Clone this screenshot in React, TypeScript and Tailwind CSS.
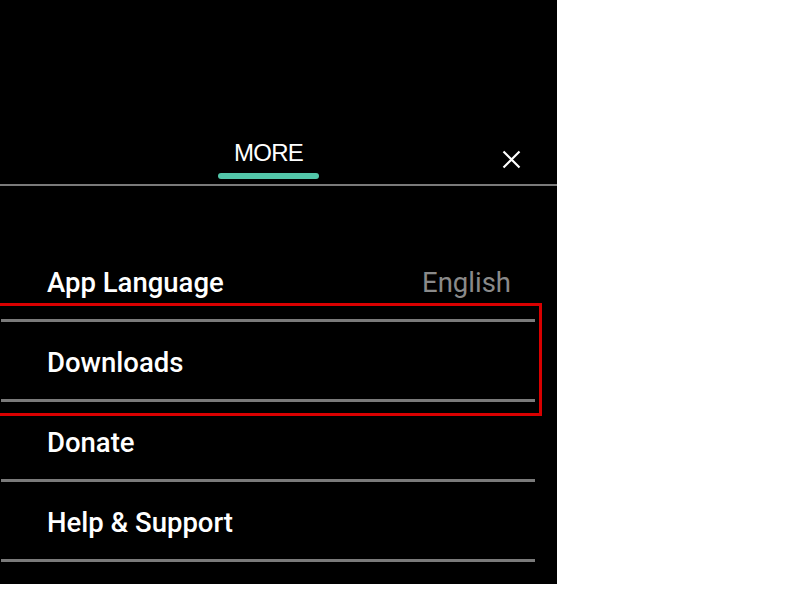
import React from 'react'

const rows = [
  { label: 'App Language', value: 'English' },
  { label: 'Downloads' },
  { label: 'Donate' },
  { label: 'Help & Support' },
]

export default function App() {
  return (
    <div className="w-[800px] h-[600px] bg-white">
      <div className="relative w-[557px] h-[584px] bg-black overflow-hidden">
        {/* header */}
        <div className="flex items-end h-[184px] pl-[218px] pr-[36px]">
          <div className="flex flex-col items-center w-[101px]">
            <span className="text-[24px] leading-[24px] tracking-[-0.8px] text-white font-['Liberation_Sans',Arial,sans-serif]">MORE</span>
            <div className="mt-[8px] mb-[5px] h-[6px] w-full rounded-full bg-[#52c6a9]" />
          </div>
          <button className="ml-auto mb-[15px] w-[19px] h-[19px] flex items-center justify-center">
            <svg width="19" height="19" viewBox="0 0 19 19" fill="none" stroke="white" strokeWidth="2.2">
              <path d="M1.5 1.5 L17.5 17.5 M17.5 1.5 L1.5 17.5" />
            </svg>
          </button>
        </div>
        <div className="h-[2px] w-full bg-[#7a7a7a]" />

        <div className="mt-[56px] font-['Roboto',sans-serif]">
          {rows.map(r => (
            <div key={r.label}>
              <div className="flex items-center h-[77px] pt-[4px] pl-[47px] pr-[46px]">
                <span className="text-[27.5px] leading-[32px] font-medium text-white">{r.label}</span>
                {r.value && <span className="ml-auto text-[27.5px] leading-[32px] text-[#8a8a8a]">{r.value}</span>}
              </div>
              <div className="ml-[1px] w-[534px] h-[3px] bg-[#7a7a7a]" />
            </div>
          ))}
        </div>

        {/* highlight box */}
        <div className="absolute left-[-3px] top-[303px] w-[545px] h-[113px] border-[3px] border-[#d90000]" />
      </div>
    </div>
  )
}
